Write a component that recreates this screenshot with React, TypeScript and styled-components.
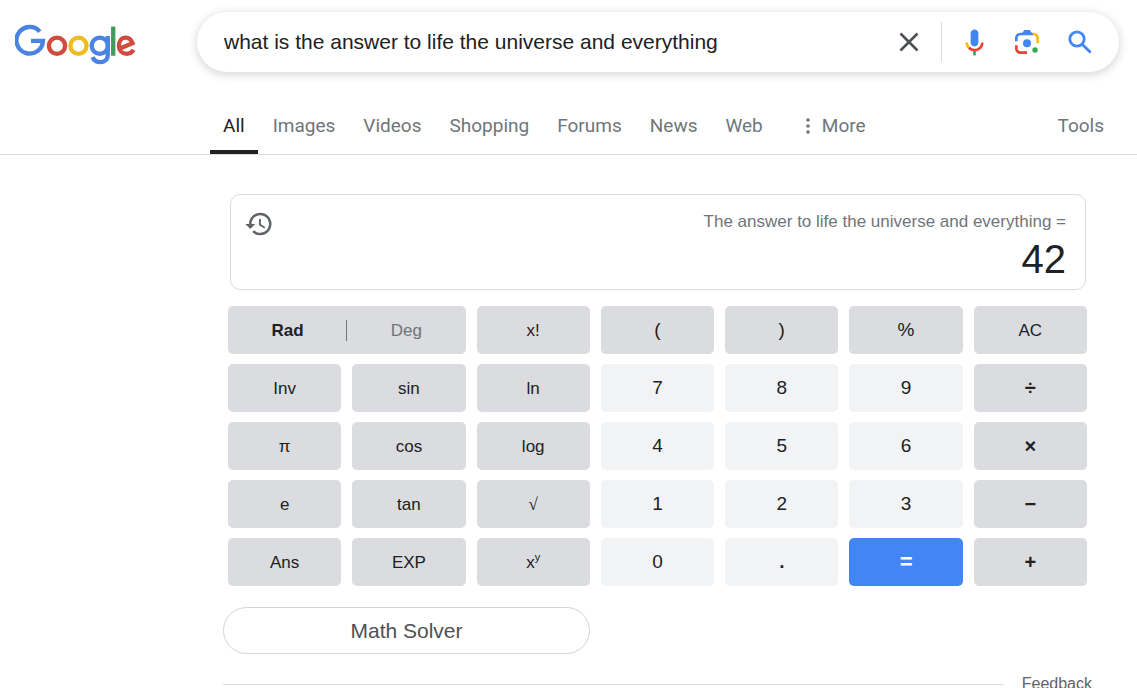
import React from "react";
import styled, { createGlobalStyle } from "styled-components";

const GlobalStyle = createGlobalStyle`
  *, *::before, *::after { box-sizing: border-box; }
  body {
    margin: 0;
    background: #fff;
    color: #202124;
    font-family: "Liberation Sans", Arial, sans-serif;
  }
  button, input { font: inherit; color: inherit; margin: 0; }
  button { cursor: pointer; }
`;

const Page = styled.div`
  height: 100vh;
  overflow: hidden;
`;

const Header = styled.header`
  display: flex;
  align-items: flex-start;
  padding: 12px 18px 0 15px;
`;

const LogoLink = styled.a`
  display: block;
  flex: 0 0 182px;
  padding-top: 12px;
  line-height: 0;
`;

const SearchForm = styled.form`
  flex: 1;
  min-width: 0;
  height: 60px;
  display: flex;
  align-items: center;
  padding: 0 22px 0 27px;
  border-radius: 30px;
  background: #fff;
  box-shadow: 0 2px 8px 1px rgba(64, 60, 67, 0.2);
`;

const SearchInput = styled.input`
  flex: 1;
  min-width: 0;
  height: 40px;
  padding: 0;
  border: 0;
  outline: 0;
  background: transparent;
  font-size: 21px;
`;

const IconButton = styled.button`
  display: flex;
  align-items: center;
  justify-content: center;
  width: 34px;
  height: 40px;
  padding: 0;
  border: 0;
  background: transparent;
`;

const HistoryButton = styled(IconButton)`
  height: 28px;
`;

const Tools = styled.div`
  display: flex;
  gap: 19px;
  margin-left: 15px;
  padding-left: 15px;
  border-left: 1px solid #dadce0;
`;

const TabBar = styled.nav`
  display: flex;
  align-items: stretch;
  gap: 2px;
  height: 57px;
  margin-top: 26px;
  padding: 0 20px 0 210px;
  border-bottom: 1px solid #dadce0;
`;

const Tab = styled.a<{ $active?: boolean }>`
  display: flex;
  align-items: center;
  padding: 4px 13px 0;
  border-bottom: 4px solid ${(p) => (p.$active ? "#202124" : "transparent")};
  color: ${(p) => (p.$active ? "#202124" : "#70757a")};
  font-family: Roboto, "Liberation Sans", sans-serif;
  font-size: 19px;
  line-height: 24px;
  text-decoration: none;
`;

const MenuTab = styled(Tab).attrs({ as: "button" })`
  gap: 12px;
  margin-left: 15px;
  border-width: 0 0 4px;
  background: transparent;
`;

const ToolsTab = styled(MenuTab)`
  margin-left: auto;
`;

const Main = styled.main`
  max-width: 869px;
  margin: 39px 30px 0 223px;
`;

const Calculator = styled.section`
  padding: 0 5px;
`;

const Display = styled.div`
  display: flex;
  justify-content: space-between;
  align-items: flex-start;
  height: 96px;
  margin: 0 1px 16px 2px;
  padding: 15px 19px 0 11px;
  border: 1px solid #dadce0;
  border-radius: 10px;
`;

const Output = styled.div`
  text-align: right;
`;

const Expression = styled.div`
  color: #70757a;
  font-size: 17px;
  line-height: 24px;
`;

const Result = styled.output`
  display: block;
  font-size: 40px;
  line-height: 50px;
`;

const Keys = styled.div`
  display: grid;
  grid-template-columns: repeat(7, 1fr);
  grid-auto-rows: 48px;
  gap: 10px 11px;
`;

type Kind = "func" | "symbol" | "digit" | "op" | "equals";

const keyLooks: Record<Kind, { background: string; size: string; padding: string }> = {
  func: { background: "#dadce0", size: "17px", padding: "2px 0 0" },
  symbol: { background: "#dadce0", size: "19px", padding: "0 0 1px" },
  digit: { background: "#f1f3f4", size: "19px", padding: "0 0 1px" },
  op: { background: "#dadce0", size: "20px", padding: "0" },
  equals: { background: "#4285f4", size: "22px", padding: "0 0 1px" },
};

const Key = styled.button<{ $kind: Kind; $strong?: boolean }>`
  padding: ${(p) => keyLooks[p.$kind].padding};
  border: 0;
  border-radius: 5px;
  background: ${(p) => keyLooks[p.$kind].background};
  color: ${(p) => (p.$kind === "equals" ? "#fff" : "#202124")};
  font-size: ${(p) => keyLooks[p.$kind].size};
  font-weight: ${(p) => (p.$strong ? 700 : 400)};
  line-height: 24px;
`;

const MathGlyph = styled.span`
  font-family: "Liberation Serif", serif;
`;

const Power = styled.sup`
  font-size: 11px;
  line-height: 0;
`;

const AngleSwitch = styled.div`
  grid-column: span 2;
  display: grid;
  grid-template-columns: 1fr 1fr;
  align-items: center;
  padding-left: 1px;
  border-radius: 5px;
  background: #dadce0;
`;

const AngleOption = styled.button<{ $active?: boolean }>`
  height: 21px;
  padding: 0;
  border: 0;
  border-right: ${(p) => (p.$active ? "1px solid #70757a" : "0")};
  background: transparent;
  color: ${(p) => (p.$active ? "#202124" : "#70757a")};
  font-size: 17px;
  font-weight: ${(p) => (p.$active ? 700 : 400)};
  line-height: 21px;
`;

const SolverButton = styled.button`
  display: block;
  width: 367px;
  max-width: 100%;
  height: 47px;
  margin-top: 21px;
  border: 1px solid #d2d4d7;
  border-radius: 24px;
  background: #fff;
  color: #4d5156;
  font-size: 21px;
`;

const Footer = styled.footer`
  display: flex;
  align-items: center;
  gap: 18px;
  margin: 20px 0 0;
`;

const Rule = styled.hr`
  flex: 1;
  margin: 0;
  border: 0;
  border-top: 1px solid #dadce0;
`;

const FeedbackLink = styled.a`
  color: #5f6368;
  font-size: 16px;
  line-height: 20px;
  text-decoration: none;
`;

const Logo = () => (
  <svg width="121" height="41" viewBox="15 24 121 41" fill="none" strokeWidth="4.3" role="img" aria-label="Google">
    <path d="M39.8 31.6A13.3 13.3 0 1 0 43 40.9H31" stroke="#4a84e0" />
    <circle cx="57" cy="45.7" r="8.1" stroke="#d04a3e" />
    <circle cx="78.5" cy="45.7" r="8.1" stroke="#efbb22" />
    <circle cx="99.8" cy="45.7" r="8.1" stroke="#4a84e0" />
    <path d="M107.8 36V54.4C107.8 59.6 104.4 62.2 100.2 62.2C96.4 62.2 93.8 60.2 92.5 57.2" stroke="#4a84e0" />
    <path d="M113.2 26.6V55.8" stroke="#3f9d5c" />
    <path d="M119.4 48.8L132.6 43.2C131.2 39.6 128.6 37.6 125.8 37.6C121.4 37.6 118.9 41.4 118.9 45.7C118.9 50.6 122.2 53.8 126.6 53.8C129.6 53.8 132 52.5 133.6 49.9" stroke="#d04a3e" />
  </svg>
);

const ClearIcon = () => (
  <svg width="20" height="20" viewBox="0 0 20 20" stroke="#4d5156" strokeWidth="2.6" aria-hidden="true">
    <path d="M1.5 1.5L18.5 18.5M18.5 1.5L1.5 18.5" />
  </svg>
);

const MicIcon = () => (
  <svg width="31" height="31" viewBox="0 0 24 24" aria-hidden="true">
    <path fill="#4285f4" d="M12 15c1.66 0 3-1.31 3-2.97v-7.02c0-1.66-1.34-3.01-3-3.01s-3 1.34-3 3.01v7.02c0 1.66 1.34 2.97 3 2.97z" />
    <path fill="#34a853" d="M11 18.08h2v3.92h-2z" />
    <path fill="#fbbc04" d="M7.05 16.87c-1.27-1.33-2.05-2.83-2.05-4.87h2c0 1.45.56 2.42 1.47 3.38v.32l-1.15 1.18z" />
    <path fill="#ea4335" d="M12 16.93a4.97 5.25 0 0 1-3.54-1.55l-1.41 1.49c1.26 1.34 3.02 2.13 4.95 2.13 3.87 0 6.99-2.92 6.99-7h-1.99c0 2.92-2.24 4.93-5 4.93z" />
  </svg>
);

const LensIcon = () => (
  <svg width="32" height="32" viewBox="0 0 192 192" aria-hidden="true">
    <circle fill="#34a853" cx="144.07" cy="144" r="16" />
    <circle fill="#4285f4" cx="96.07" cy="104" r="24" />
    <path fill="#ea4335" d="M24 135.2c0 18.11 14.69 32.8 32.8 32.8H96v-16l-40.1-.1c-8.8 0-15.9-8.19-15.9-17.9v-18H24v19.2z" />
    <path fill="#fbbc04" d="M168 72.8c0-18.11-14.69-32.8-32.8-32.8H116l20 16c8.8 0 16 8.29 16 18v30h16V72.8z" />
    <path fill="#4285f4" d="M112 24l-32 0L68 40H56.8C38.69 40 24 54.69 24 72.8V92h16V74c0-9.71 7.2-18 16-18h80L124 40 112 24z" />
  </svg>
);

const SearchIcon = () => (
  <svg width="24" height="24" viewBox="0 0 24 24" fill="none" stroke="#4285f4" strokeWidth="2.8" aria-hidden="true">
    <circle cx="9" cy="9" r="7.2" />
    <path d="M14.2 14.2L22.6 22.6" />
  </svg>
);

const HistoryIcon = () => (
  <svg width="30" height="30" viewBox="0 0 24 24" fill="#5f6368" aria-hidden="true">
    <path d="M13 3a9 9 0 0 0-9 9H1l3.89 3.89.07.14L9 12H6c0-3.87 3.13-7 7-7s7 3.13 7 7-3.13 7-7 7c-1.93 0-3.68-.79-4.94-2.06l-1.42 1.42A8.954 8.954 0 0 0 13 21a9 9 0 0 0 0-18zm-1 5v5l4.28 2.54.72-1.21-3.5-2.08V8H12z" />
  </svg>
);

const DotsIcon = () => (
  <svg width="4" height="16" viewBox="0 0 4 16" fill="#70757a" aria-hidden="true">
    <circle cx="2" cy="2" r="1.8" />
    <circle cx="2" cy="8" r="1.8" />
    <circle cx="2" cy="14" r="1.8" />
  </svg>
);

const tabs = ["All", "Images", "Videos", "Shopping", "Forums", "News", "Web"];

type KeySpec = { label: string; kind: Kind; strong?: boolean; sup?: string; glyph?: boolean };

const keys: KeySpec[] = [
  { label: "x!", kind: "func" },
  { label: "(", kind: "symbol" },
  { label: ")", kind: "symbol" },
  { label: "%", kind: "symbol" },
  { label: "AC", kind: "func" },
  { label: "Inv", kind: "func" },
  { label: "sin", kind: "func" },
  { label: "ln", kind: "func" },
  { label: "7", kind: "digit" },
  { label: "8", kind: "digit" },
  { label: "9", kind: "digit" },
  { label: "÷", kind: "op", strong: true },
  { label: "π", kind: "func" },
  { label: "cos", kind: "func" },
  { label: "log", kind: "func" },
  { label: "4", kind: "digit" },
  { label: "5", kind: "digit" },
  { label: "6", kind: "digit" },
  { label: "×", kind: "op", strong: true },
  { label: "e", kind: "func" },
  { label: "tan", kind: "func" },
  { label: "√", kind: "func", glyph: true },
  { label: "1", kind: "digit" },
  { label: "2", kind: "digit" },
  { label: "3", kind: "digit" },
  { label: "−", kind: "op", strong: true },
  { label: "Ans", kind: "func" },
  { label: "EXP", kind: "func" },
  { label: "x", sup: "y", kind: "func" },
  { label: "0", kind: "digit" },
  { label: ".", kind: "digit", strong: true },
  { label: "=", kind: "equals", strong: true },
  { label: "+", kind: "op", strong: true },
];

export default function App() {
  return (
    <Page>
      <GlobalStyle />
      <Header>
        <LogoLink href="#home">
          <Logo />
        </LogoLink>
        <SearchForm role="search" onSubmit={(e) => e.preventDefault()}>
          <SearchInput
            type="text"
            aria-label="Search"
            defaultValue="what is the answer to life the universe and everything"
          />
          <IconButton type="button" aria-label="Clear">
            <ClearIcon />
          </IconButton>
          <Tools>
            <IconButton type="button" aria-label="Search by voice">
              <MicIcon />
            </IconButton>
            <IconButton type="button" aria-label="Search by image">
              <LensIcon />
            </IconButton>
            <IconButton type="submit" aria-label="Search">
              <SearchIcon />
            </IconButton>
          </Tools>
        </SearchForm>
      </Header>
      <TabBar>
        {tabs.map((name, i) => (
          <Tab key={name} href={"#" + name.toLowerCase()} $active={i === 0}>
            {name}
          </Tab>
        ))}
        <MenuTab>
          <DotsIcon />
          More
        </MenuTab>
        <ToolsTab>Tools</ToolsTab>
      </TabBar>
      <Main>
        <Calculator aria-label="Calculator">
          <Display>
            <HistoryButton type="button" aria-label="History">
              <HistoryIcon />
            </HistoryButton>
            <Output>
              <Expression>The answer to life the universe and everything =</Expression>
              <Result>42</Result>
            </Output>
          </Display>
          <Keys>
            <AngleSwitch>
              <AngleOption type="button" $active>
                Rad
              </AngleOption>
              <AngleOption type="button">Deg</AngleOption>
            </AngleSwitch>
            {keys.map((k) => (
              <Key key={k.label} type="button" $kind={k.kind} $strong={k.strong}>
                {k.glyph ? <MathGlyph>{k.label}</MathGlyph> : k.label}
                {k.sup && <Power>{k.sup}</Power>}
              </Key>
            ))}
          </Keys>
        </Calculator>
        <SolverButton type="button">Math Solver</SolverButton>
        <Footer>
          <Rule />
          <FeedbackLink href="#feedback">Feedback</FeedbackLink>
        </Footer>
      </Main>
    </Page>
  );
}
